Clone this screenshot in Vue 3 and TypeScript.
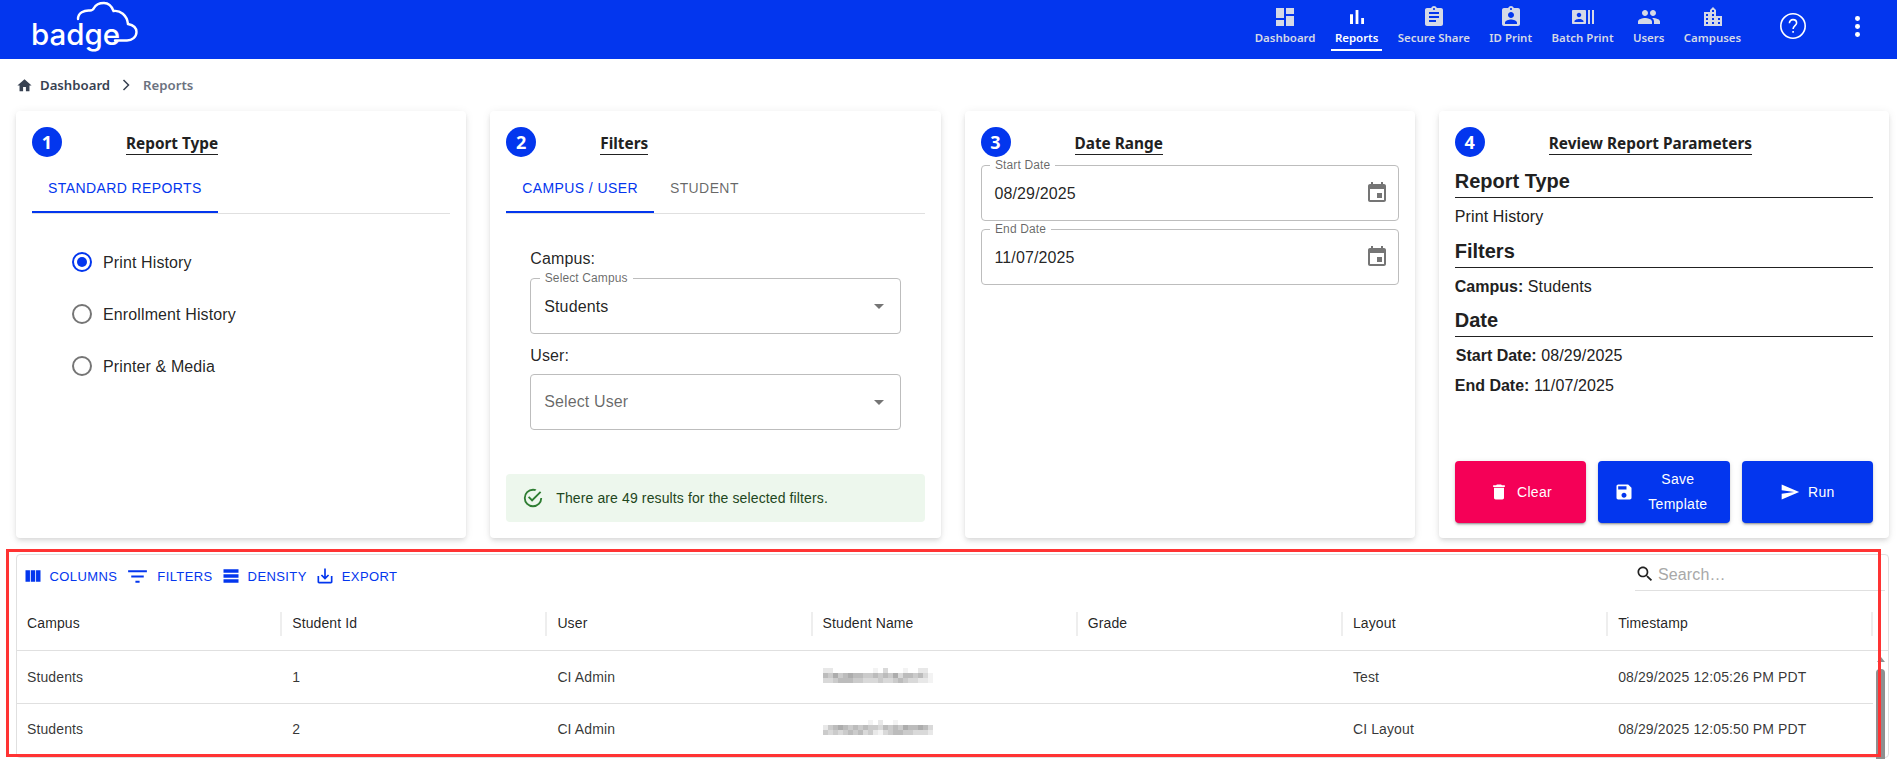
<script setup lang="ts">
interface NavItem { label: string; path: string; active?: boolean }

const navItems: NavItem[] = [
  { label: 'Dashboard', path: 'M3 13h8V3H3v10zm0 8h8v-6H3v6zm10 0h8V11h-8v10zm0-18v6h8V3h-8z' },
  { label: 'Reports', active: true, path: 'M5 9.2h3V19H5zM10.6 5h2.8v14h-2.8zm5.6 8H19v6h-2.8z' },
  { label: 'Secure Share', path: 'M19 3h-4.18C14.4 1.84 13.3 1 12 1c-1.3 0-2.4.84-2.82 2H5c-1.1 0-2 .9-2 2v14c0 1.1.9 2 2 2h14c1.1 0 2-.9 2-2V5c0-1.1-.9-2-2-2zm-7 0c.55 0 1 .45 1 1s-.45 1-1 1-1-.45-1-1 .45-1 1-1zm2 14H7v-2h7v2zm3-4H7v-2h10v2zm0-4H7V7h10v2z' },
  { label: 'ID Print', path: 'M19 3h-4.18C14.4 1.84 13.3 1 12 1c-1.3 0-2.4.84-2.82 2H5c-1.1 0-2 .9-2 2v14c0 1.1.9 2 2 2h14c1.1 0 2-.9 2-2V5c0-1.1-.9-2-2-2zm-7 0c.55 0 1 .45 1 1s-.45 1-1 1-1-.45-1-1 .45-1 1-1zm0 4c1.66 0 3 1.34 3 3s-1.34 3-3 3-3-1.34-3-3 1.34-3 3-3zm6 12H6v-1.4c0-2 4-3.1 6-3.1s6 1.1 6 3.1V19z' },
  { label: 'Batch Print', path: 'M21 5v14h2V5h-2zm-4 14h2V5h-2v14zM14 5H2c-.55 0-1 .45-1 1v12c0 .55.45 1 1 1h12c.55 0 1-.45 1-1V6c0-.55-.45-1-1-1zM8 7.75c1.24 0 2.25 1.01 2.25 2.25S9.24 12.25 8 12.25 5.75 11.24 5.75 10 6.76 7.75 8 7.75zM12.5 17h-9v-.75c0-1.5 3-2.25 4.5-2.25s4.5.75 4.5 2.25V17z' },
  { label: 'Users', path: 'M16 11c1.66 0 2.99-1.34 2.99-3S17.66 5 16 5c-1.66 0-3 1.34-3 3s1.34 3 3 3zm-8 0c1.66 0 2.99-1.34 2.99-3S9.66 5 8 5C6.34 5 5 6.34 5 8s1.34 3 3 3zm0 2c-2.33 0-7 1.17-7 3.5V19h14v-2.5c0-2.33-4.67-3.5-7-3.5zm8 0c-.29 0-.62.02-.97.05 1.16.84 1.97 1.97 1.97 3.45V19h6v-2.5c0-2.33-4.67-3.5-7-3.5z' },
  { label: 'Campuses', path: 'M15 11V5l-3-3-3 3v2H3v14h18V11h-6zm-8 8H5v-2h2v2zm0-4H5v-2h2v2zm0-4H5V9h2v2zm6 8h-2v-2h2v2zm0-4h-2v-2h2v2zm0-4h-2V9h2v2zm0-4h-2V5h2v2zm6 12h-2v-2h2v2zm0-4h-2v-2h2v2z' },
]

const radios = [
  { label: 'Print History', checked: true },
  { label: 'Enrollment History', checked: false },
  { label: 'Printer & Media', checked: false },
]

const eventPath = 'M17 12h-5v5h5v-5zM16 1v2H8V1H6v2H5c-1.11 0-1.99.9-1.99 2L3 19c0 1.1.89 2 2 2h14c1.1 0 2-.9 2-2V5c0-1.1-.9-2-2-2h-1V1h-2zm3 18H5V8h14v11z'

const dates = [
  { label: 'Start Date', value: '08/29/2025' },
  { label: 'End Date', value: '11/07/2025' },
]

const tools = [
  { label: 'COLUMNS', size: 20, path: 'M14.67 5v14H9.33V5h5.34zm1 14H21V5h-5.33v14zm-7.34 0V5H3v14h5.33z' },
  { label: 'FILTERS', size: 25, path: 'M10 18h4v-2h-4v2zM3 6v2h18V6H3zm3 7h12v-2H6v2z' },
  { label: 'DENSITY', size: 20, path: 'M21 8H3V4h18v4zm0 2H3v4h18v-4zm0 6H3v4h18v-4z' },
  { label: 'EXPORT', size: 20, path: 'M19 12v7H5v-7H3v7c0 1.1.9 2 2 2h14c1.1 0 2-.9 2-2v-7h-2zm-6 .67l2.59-2.58L17 11.5l-5 5-5-5 1.41-1.41L11 12.67V3h2z' },
]

const columns = ['Campus', 'Student Id', 'User', 'Student Name', 'Grade', 'Layout', 'Timestamp']

const shades: Record<string, string> = {
  a: '#adadad', b: '#bcbcbc', c: '#cbcbcb', d: '#d9d9d9', e: '#e8e8e8', f: '#f3f3f3', '.': '#ffffff',
}

function mosaic(lines: string[]) {
  return lines.flatMap((line, y) =>
    line.split('').map((ch, x) => ({ key: `${x}-${y}`, x: x * 5, y: y * 5, fill: shades[ch] })),
  )
}

const rows = [
  {
    id: '1',
    layout: 'Test',
    time: '08/29/2025 12:05:26 PM PDT',
    blur: mosaic(['ee........f.d...f..ee.', 'bcacbabbccbcbcadbbcbdf', 'ddcbbbccdddcddcbcddeef']),
  },
  {
    id: '2',
    layout: 'CI Layout',
    time: '08/29/2025 12:05:50 PM PDT',
    blur: mosaic(['.........f.e..f.......', 'ecbabcbcbccdbcbcabbabd', 'cdcdcbcbdcefdcbbccddde']),
  },
]
</script>

<template>
  <div class="page">
    <header class="topbar">
      <div class="logo">
        <svg class="cloud" width="150" height="59" viewBox="0 0 150 59" fill="none">
          <path d="M78 19C78 13 84 10 90 10.5C92 10.5 93 10 94 8C96 4 100 3 104 3C109 3 112 7 113.5 11C120 10 127 15 128 24C133 25 136.5 28 136.5 32C136.5 37 132 40.5 127 40.5H115" stroke="#fff" stroke-width="2.4" stroke-linecap="round" />
        </svg>
        <span class="logo-text">badge</span>
      </div>
      <nav class="nav">
        <a v-for="item in navItems" :key="item.label" class="nav-item" :class="{ active: item.active }">
          <svg width="24" height="24" viewBox="0 0 24 24" fill="currentColor"><path :d="item.path" /></svg>
          <span>{{ item.label }}</span>
        </a>
      </nav>
      <svg class="help" width="28" height="28" viewBox="0 0 28 28" fill="none" stroke="#fff" stroke-width="1.6">
        <circle cx="14" cy="14" r="12.2" />
        <path d="M10.4 11.2c0-2.2 1.6-3.6 3.6-3.6s3.6 1.4 3.6 3.3c0 2.6-3.5 2.8-3.5 6" />
        <path d="M14.1 19v1.8" />
      </svg>
      <div class="more">
        <i></i><i></i><i></i>
      </div>
    </header>

    <div class="crumbs">
      <svg width="17" height="17" viewBox="0 0 24 24" fill="#374151"><path d="M10 20v-6h4v6h5v-8h3L12 3 2 12h3v8z" /></svg>
      <span class="crumb-strong">Dashboard</span>
      <svg width="8" height="12" viewBox="0 0 8 12" fill="none" stroke="#374151" stroke-width="1.5"><path d="M1.5 1l5 5-5 5" /></svg>
      <span class="crumb-muted">Reports</span>
    </div>

    <section class="cards">
      <article class="card">
        <div class="card-head">
          <span class="step">1</span>
          <h2 class="card-title">Report Type</h2>
        </div>
        <div class="tabs">
          <span class="tab selected">STANDARD REPORTS</span>
        </div>
        <div class="radio-list">
          <label v-for="r in radios" :key="r.label" class="radio">
            <span class="radio-mark" :class="{ checked: r.checked }"></span>
            <span class="radio-text">{{ r.label }}</span>
          </label>
        </div>
      </article>

      <article class="card">
        <div class="card-head">
          <span class="step">2</span>
          <h2 class="card-title">Filters</h2>
        </div>
        <div class="tabs">
          <span class="tab selected">CAMPUS / USER</span>
          <span class="tab">STUDENT</span>
        </div>
        <div class="form">
          <div class="form-label">Campus:</div>
          <div class="field">
            <span class="legend">Select Campus</span>
            <span class="value">Students</span>
            <span class="caret"></span>
          </div>
          <div class="form-label second">User:</div>
          <div class="field">
            <span class="placeholder">Select User</span>
            <span class="caret"></span>
          </div>
        </div>
        <div class="alert">
          <svg width="22" height="22" viewBox="0 0 24 24" fill="#2e7d32"><path d="M20 12a8 8 0 0 1-8 8 8 8 0 0 1-8-8 8 8 0 0 1 8-8c.76 0 1.5.11 2.2.31l1.57-1.57C14.61 2.26 13.34 2 12 2a10 10 0 0 0-10 10 10 10 0 0 0 10 10 10 10 0 0 0 10-10M7.91 10.08L6.5 11.5 11 16 21 6l-1.41-1.42L11 13.17l-3.09-3.09z" /></svg>
          <span>There are 49 results for the selected filters.</span>
        </div>
      </article>

      <article class="card">
        <div class="card-head">
          <span class="step">3</span>
          <h2 class="card-title">Date Range</h2>
        </div>
        <div class="date-list">
          <div v-for="d in dates" :key="d.label" class="field date">
            <span class="legend">{{ d.label }}</span>
            <span class="value">{{ d.value }}</span>
            <svg class="cal" width="24" height="24" viewBox="0 0 24 24" fill="#757575"><path :d="eventPath" /></svg>
          </div>
        </div>
      </article>

      <article class="card">
        <div class="card-head">
          <span class="step">4</span>
          <h2 class="card-title">Review Report Parameters</h2>
        </div>
        <h3 class="review-head first">Report Type</h3>
        <p class="review-line">Print History</p>
        <h3 class="review-head">Filters</h3>
        <p class="review-line"><b>Campus:</b> Students</p>
        <h3 class="review-head">Date</h3>
        <p class="review-line indent"><b>Start Date:</b> 08/29/2025</p>
        <p class="review-line"><b>End Date:</b> 11/07/2025</p>
        <div class="actions">
          <button class="btn danger">
            <svg width="20" height="20" viewBox="0 0 24 24" fill="#fff"><path d="M6 19c0 1.1.9 2 2 2h8c1.1 0 2-.9 2-2V7H6v12zM19 4h-3.5l-1-1h-5l-1 1H5v2h14V4z" /></svg>
            <span>Clear</span>
          </button>
          <button class="btn">
            <svg width="20" height="20" viewBox="0 0 24 24" fill="#fff"><path d="M17 3H5c-1.11 0-2 .9-2 2v14c0 1.1.89 2 2 2h14c1.1 0 2-.9 2-2V7l-4-4zm-5 16c-1.66 0-3-1.34-3-3s1.34-3 3-3 3 1.34 3 3-1.34 3-3 3zm3-10H5V5h10v4z" /></svg>
            <span>Save Template</span>
          </button>
          <button class="btn">
            <svg width="20" height="20" viewBox="0 0 24 24" fill="#fff"><path d="M2.01 21L23 12 2.01 3 2 10l15 2-15 2z" /></svg>
            <span>Run</span>
          </button>
        </div>
      </article>
    </section>

    <section class="grid-wrap">
      <div class="grid">
        <div class="toolbar">
          <button v-for="t in tools" :key="t.label" class="tool">
            <svg :width="t.size" :height="t.size" viewBox="0 0 24 24" fill="currentColor"><path :d="t.path" /></svg>
            <span>{{ t.label }}</span>
          </button>
          <div class="search">
            <svg width="20" height="20" viewBox="0 0 24 24" fill="#222"><path d="M15.5 14h-.79l-.28-.27C15.41 12.59 16 11.11 16 9.5 16 5.91 13.09 3 9.5 3S3 5.91 3 9.5 5.91 16 9.5 16c1.61 0 3.09-.59 4.23-1.57l.27.28v.79l5 4.99L20.49 19l-4.99-5zm-6 0C7.01 14 5 11.99 5 9.5S7.01 5 9.5 5 14 7.01 14 9.5 11.99 14 9.5 14z" /></svg>
            <span class="search-text">Search…</span>
          </div>
        </div>
        <div class="grid-header">
          <div v-for="c in columns" :key="c" class="hcell">{{ c }}</div>
        </div>
        <div class="grid-body">
          <div class="grid-rows">
            <div v-for="r in rows" :key="r.id" class="grow">
              <div class="cell">Students</div>
              <div class="cell">{{ r.id }}</div>
              <div class="cell">CI Admin</div>
              <div class="cell">
                <svg class="mosaic" width="110" height="15" viewBox="0 0 110 15" shape-rendering="crispEdges">
                  <rect v-for="m in r.blur" :key="m.key" :x="m.x" :y="m.y" width="5" height="5" :fill="m.fill" />
                </svg>
              </div>
              <div class="cell"></div>
              <div class="cell">{{ r.layout }}</div>
              <div class="cell">{{ r.time }}</div>
            </div>
          </div>
          <div class="vscroll">
            <span class="vscroll-arrow"></span>
            <span class="vscroll-thumb"></span>
          </div>
        </div>
      </div>
    </section>

    <div class="annotation"></div>
  </div>
</template>

<style>
html, body { margin: 0; background: #fff; overflow: hidden; }
</style>

<style scoped>
.page {
  position: relative;
  width: 1897px;
  height: 759px;
  overflow: hidden;
  background: #fff;
  font-family: "Liberation Sans", Arial, sans-serif;
  letter-spacing: 0.12px;
  color: rgba(0, 0, 0, 0.87);
}
.topbar {
  height: 59px;
  background: #0336ee;
  display: flex;
  align-items: flex-start;
  color: #fff;
}
.logo { position: relative; width: 150px; height: 59px; flex: none; margin-right: auto; }
.cloud { position: absolute; left: 0; top: 0; }
.logo-text {
  position: absolute;
  left: 31px;
  top: 17px;
  font-family: Inter, sans-serif;
  font-size: 29.5px;
  line-height: 34px;
  font-weight: 500;
  letter-spacing: 0;
  color: #fff;
}
.nav { display: flex; gap: 11.4px; height: 51px; }
.nav-item {
  display: flex;
  flex-direction: column;
  align-items: center;
  padding: 5px 4px 0;
  height: 51px;
  box-sizing: border-box;
  color: #d5d9e6;
  font-family: "Noto Sans", sans-serif;
  font-size: 11.45px;
  font-weight: 600;
  line-height: 16px;
  letter-spacing: 0;
  white-space: nowrap;
}
.nav-item svg { flex: none; margin-bottom: 1px; }
.nav-item.active { color: #fff; border-bottom: 2px solid #fff; }
.help { margin: 12px 0 0 34px; flex: none; }
.more { display: flex; flex-direction: column; gap: 3.2px; margin: 16px 37px 0 48px; flex: none; }
.more i { display: block; width: 4.8px; height: 4.8px; border-radius: 50%; background: #fff; }

.crumbs {
  height: 52px;
  display: flex;
  align-items: center;
  padding: 0 0 0 15.5px;
  box-sizing: border-box;
  font-family: "Noto Sans", sans-serif;
  font-size: 13.2px;
  font-weight: 600;
  letter-spacing: 0;
}
.crumb-strong { margin: 0 12px 0 7.5px; color: #374151; }
.crumb-muted { margin-left: 13px; color: #6b7280; }

.cards {
  display: grid;
  grid-template-columns: repeat(4, 1fr);
  gap: 24px;
  padding: 0 8px 0 16px;
}
.card {
  height: 427px;
  box-sizing: border-box;
  padding: 16px;
  border-radius: 4px;
  background: #fff;
  box-shadow: 0 2px 4px -1px rgba(0,0,0,.08), 0 4px 5px rgba(0,0,0,.05), 0 1px 10px rgba(0,0,0,.07);
  display: flex;
  flex-direction: column;
}
.card-head { display: flex; align-items: flex-start; height: 38px; flex: none; }
.step {
  width: 30px;
  height: 30px;
  border-radius: 50%;
  background: #0336ee;
  color: #fff;
  font-family: "Noto Sans", sans-serif;
  font-size: 18px;
  font-weight: 700;
  line-height: 30px;
  letter-spacing: 0;
  text-align: center;
  flex: none;
}
.card-title {
  margin: 5px 0 0 64px;
  font-family: "Noto Sans", sans-serif;
  font-size: 15.35px;
  line-height: 22px;
  font-weight: 700;
  letter-spacing: 0;
  color: #212121;
  border-bottom: 1px solid #212121;
}
.tabs { display: flex; border-bottom: 1px solid #e0e0e0; height: 48px; flex: none; }
.tab {
  height: 48px;
  box-sizing: border-box;
  padding: 0 16px;
  font-size: 14px;
  letter-spacing: 0.4px;
  line-height: 47px;
  color: rgba(0,0,0,.6);
  white-space: nowrap;
}
.tab.selected { color: #0336ee; border-bottom: 2px solid #0336ee; }

.radio-list { margin: 22px 0 0 40px; display: flex; flex-direction: column; }
.radio { display: flex; align-items: center; height: 52px; gap: 11px; font-size: 16px; }
.radio-text { padding-top: 2px; }
.radio-mark {
  width: 20px;
  height: 20px;
  box-sizing: border-box;
  border-radius: 50%;
  border: 2px solid #757575;
  flex: none;
  display: flex;
  align-items: center;
  justify-content: center;
}
.radio-mark.checked { border-color: #0336ee; }
.radio-mark.checked::after {
  content: "";
  width: 10px;
  height: 10px;
  border-radius: 50%;
  background: #0336ee;
}

.form { margin: 33px 24px 0; display: flex; flex-direction: column; }
.form-label { font-size: 16px; line-height: 24px; margin-bottom: 7px; }
.form-label.second { margin-top: 10px; margin-bottom: 6px; }
.field {
  position: relative;
  height: 56px;
  box-sizing: border-box;
  border: 1px solid #bdbdbd;
  border-radius: 4px;
  display: flex;
  align-items: center;
  padding: 0 13px;
  flex: none;
}
.legend {
  position: absolute;
  left: 8.5px;
  top: -8px;
  padding: 0 5px;
  background: #fff;
  font-size: 12px;
  line-height: 14px;
  color: rgba(0,0,0,.6);
}
.value { font-size: 16px; padding-top: 2px; }
.placeholder { font-size: 16px; color: rgba(0,0,0,.6); }
.caret {
  margin-left: auto;
  margin-right: 3px;
  width: 0;
  height: 0;
  border-left: 5px solid transparent;
  border-right: 5px solid transparent;
  border-top: 5px solid #757575;
}
.alert {
  margin-top: auto;
  height: 48px;
  flex: none;
  box-sizing: border-box;
  padding: 0 16px;
  border-radius: 4px;
  background: #edf7ed;
  color: #1e4620;
  font-size: 14px;
  display: flex;
  align-items: center;
  gap: 12px;
}

.date-list { display: flex; flex-direction: column; gap: 8px; }
.cal { margin-left: auto; margin-right: -4px; }

.review-head {
  margin: 5.5px 0 0;
  font-size: 20px;
  line-height: 32px;
  font-weight: 700;
  letter-spacing: 0;
  color: #212121;
  border-bottom: 1px solid #212121;
}
.review-head.first { margin-top: 0; }
.review-line { margin: 6px 0 0; padding-top: 1px; font-size: 16px; line-height: 24px; color: #212121; }
.review-line + .review-line { margin-top: 5px; }
.review-line b { font-weight: 700; letter-spacing: 0; }
.indent { padding-left: 1px; }
.actions {
  margin-top: auto;
  display: grid;
  grid-template-columns: repeat(3, 1fr);
  gap: 12px;
  height: 61px;
  flex: none;
}
.btn {
  border: 0;
  border-radius: 4px;
  background: #0336ee;
  color: #fff;
  font-family: "Liberation Sans", Arial, sans-serif;
  font-size: 14px;
  line-height: 25px;
  letter-spacing: 0.3px;
  padding: 6px 16px;
  display: flex;
  align-items: center;
  justify-content: center;
  gap: 8px;
  box-shadow: 0 3px 1px -2px rgba(0,0,0,.2), 0 2px 2px rgba(0,0,0,.14), 0 1px 5px rgba(0,0,0,.12);
}
.btn svg { flex: none; }
.btn.danger { background: #f50057; }

.grid-wrap { padding: 16px 8px 0 16px; }
.grid {
  border: 1px solid #e0e0e0;
  border-radius: 4px;
}
.toolbar { height: 42px; display: flex; align-items: center; gap: 8px; padding-left: 5.5px; }
.tool {
  display: flex;
  align-items: center;
  gap: 7px;
  border: 0;
  padding: 0;
  background: none;
  color: #0336ee;
  font-family: "Liberation Sans", Arial, sans-serif;
  font-size: 13px;
  letter-spacing: 0.4px;
}
.search {
  margin: 3px 3px 0 auto;
  align-self: flex-start;
  width: 250px;
  height: 33px;
  box-sizing: border-box;
  border-bottom: 1px solid #e0e0e0;
  display: flex;
  align-items: center;
  gap: 3px;
  font-size: 16px;
  color: #a8a8a8;
}
.search-text { padding-top: 2px; }
.grid-header {
  display: grid;
  grid-template-columns: repeat(7, 265.2px);
  height: 54px;
  box-sizing: border-box;
  border-bottom: 1px solid #e0e0e0;
  align-items: center;
}
.hcell {
  height: 24px;
  line-height: 22px;
  padding-left: 10px;
  font-size: 14px;
  border-right: 2px solid #eeeeee;
  box-sizing: border-box;
}
.grid-body { display: flex; }
.grid-rows { flex: 1; min-width: 0; }
.grow {
  display: grid;
  grid-template-columns: repeat(7, 265.2px);
  height: 53px;
  box-sizing: border-box;
  border-bottom: 1px solid #e0e0e0;
}
.grow + .grow .cell { padding-bottom: 2px; }
.cell {
  display: flex;
  align-items: center;
  padding-left: 10px;
  font-size: 14px;
  color: rgba(0,0,0,.8);
  white-space: nowrap;
}
.mosaic { display: block; margin-top: -3px; }
.vscroll { width: 15px; flex: none; position: relative; }
.vscroll-arrow {
  position: absolute;
  left: 3.5px;
  top: 6px;
  width: 0;
  height: 0;
  border-left: 4px solid transparent;
  border-right: 4px solid transparent;
  border-bottom: 5px solid #8f8f8f;
}
.vscroll-thumb {
  position: absolute;
  left: 3px;
  top: 18px;
  width: 9px;
  height: 120px;
  border-radius: 4px 4px 0 0;
  background: #8f8f8f;
}
.annotation {
  position: absolute;
  left: 6px;
  top: 549px;
  width: 1875px;
  height: 208px;
  box-sizing: border-box;
  border: 3px solid #ff3333;
  pointer-events: none;
}
</style>
